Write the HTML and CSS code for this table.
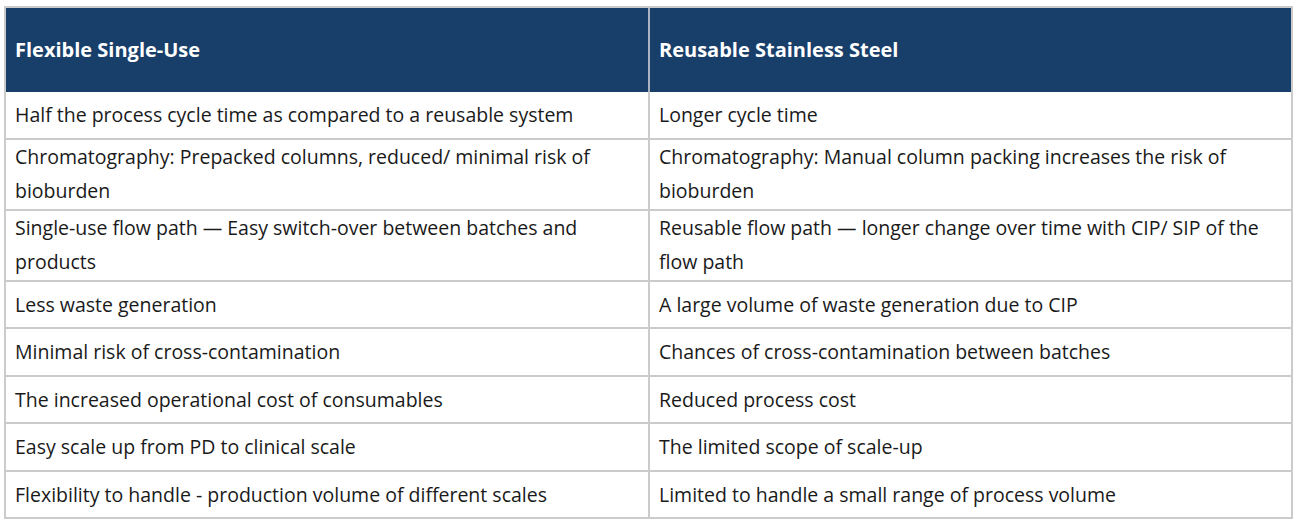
FILE: index.html
```html
<!DOCTYPE html>
<html lang="en">
<head>
<meta charset="utf-8">
<title>Flexible Single-Use vs Reusable Stainless Steel</title>
<link rel="stylesheet" href="styles.css">
</head>
<body>
<table class="compare">
  <thead>
    <tr class="head-row">
      <th class="col-a">Flexible Single-Use</th>
      <th class="col-b">Reusable Stainless Steel</th>
    </tr>
  </thead>
  <tbody>
    <tr class="row single">
      <td>Half the process cycle time as compared to a reusable system</td>
      <td>Longer cycle time</td>
    </tr>
    <tr class="row">
      <td>Chromatography: Prepacked columns, reduced/ minimal risk of bioburden</td>
      <td>Chromatography: Manual column packing increases the risk of bioburden</td>
    </tr>
    <tr class="row">
      <td>Single-use flow path — Easy switch-over between batches and products</td>
      <td>Reusable flow path — longer change over time with CIP/ SIP of the flow path</td>
    </tr>
    <tr class="row single">
      <td>Less waste generation</td>
      <td>A large volume of waste generation due to CIP</td>
    </tr>
    <tr class="row single">
      <td>Minimal risk of cross-contamination</td>
      <td>Chances of cross-contamination between batches</td>
    </tr>
    <tr class="row single">
      <td>The increased operational cost of consumables</td>
      <td>Reduced process cost</td>
    </tr>
    <tr class="row single">
      <td>Easy scale up from PD to clinical scale</td>
      <td>The limited scope of scale-up</td>
    </tr>
    <tr class="row single">
      <td>Flexibility to handle - production volume of different scales</td>
      <td>Limited to handle a small range of process volume</td>
    </tr>
  </tbody>
</table>
</body>
</html>
```
FILE: styles.css
```css
html, body {
  margin: 0;
  padding: 0;
  background: #ffffff;
}

body {
  padding: 6px 7px 0 4px;
  font-family: "Open Sans", "Noto Sans", sans-serif;
  color: #1a1a1a;
}

.compare {
  width: 1289px;
  border-collapse: separate;
  border-spacing: 0;
  border-top: 2px solid #cbcbcb;
  border-left: 2px solid #cbcbcb;
  table-layout: fixed;
}

.compare th,
.compare td {
  text-align: left;
  vertical-align: middle;
  padding: 0 20px 0 9px;
  border-right: 2px solid #cbcbcb;
  border-bottom: 2px solid #cbcbcb;
}

.col-a {
  width: 644px;
  box-sizing: border-box;
}

.head-row th {
  height: 84px;
  background: #183e6a;
  color: #ffffff;
  font-size: 20px;
  font-weight: 700;
  line-height: 28px;
  border-bottom: none;
  box-sizing: border-box;
}

.head-row th.col-a {
  border-right-color: #aab3bf;
}

.row td {
  font-size: 19.5px;
  line-height: 34.5px;
}

.row.single td {
  height: 44.5px;
  padding-top: 1px;
  box-sizing: content-box;
}
```
